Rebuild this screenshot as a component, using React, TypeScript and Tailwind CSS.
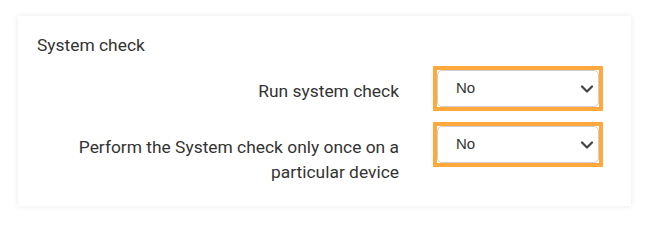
import { ChevronDown } from "lucide-react";

const rows = [
  { label: "Run system check", value: "No" },
  { label: "Perform the System check only once on a particular device", value: "No" },
];

function SelectBox({ value }: { value: string }) {
  return (
    <div className="border-4 border-[#ffa83b] w-[170px]">
      <div className="flex items-center justify-between h-[37px] bg-white border border-[#cfcfcf] rounded-[5px] pl-[18px] pr-[1px]">
        <span className="text-[15px] text-[#333] font-['Liberation_Sans',Arial,sans-serif]">{value}</span>
        <ChevronDown className="w-5 h-5 text-[#444]" strokeWidth={2.7} />
      </div>
    </div>
  );
}

export default function App() {
  return (
    <div className="w-[649px] h-[223px] bg-white pt-4 pl-[18px] font-['Roboto',sans-serif]">
      <div className="w-[613px] h-[190px] bg-white shadow-[0_0_6px_rgba(0,0,0,0.09)] pt-[17px] pl-[19px]">
        <h2 className="text-[17.4px] leading-6 text-[#333]">System check</h2>
        <div className="mt-[9px] flex flex-col gap-[11px]">
          {rows.map((row) => (
            <div key={row.label} className="flex items-start gap-[34px]">
              <label className="w-[362px] text-right text-[17.4px] leading-[25px] text-[#333] pt-[13px]">
                {row.label}
              </label>
              <SelectBox value={row.value} />
            </div>
          ))}
        </div>
      </div>
    </div>
  );
}
